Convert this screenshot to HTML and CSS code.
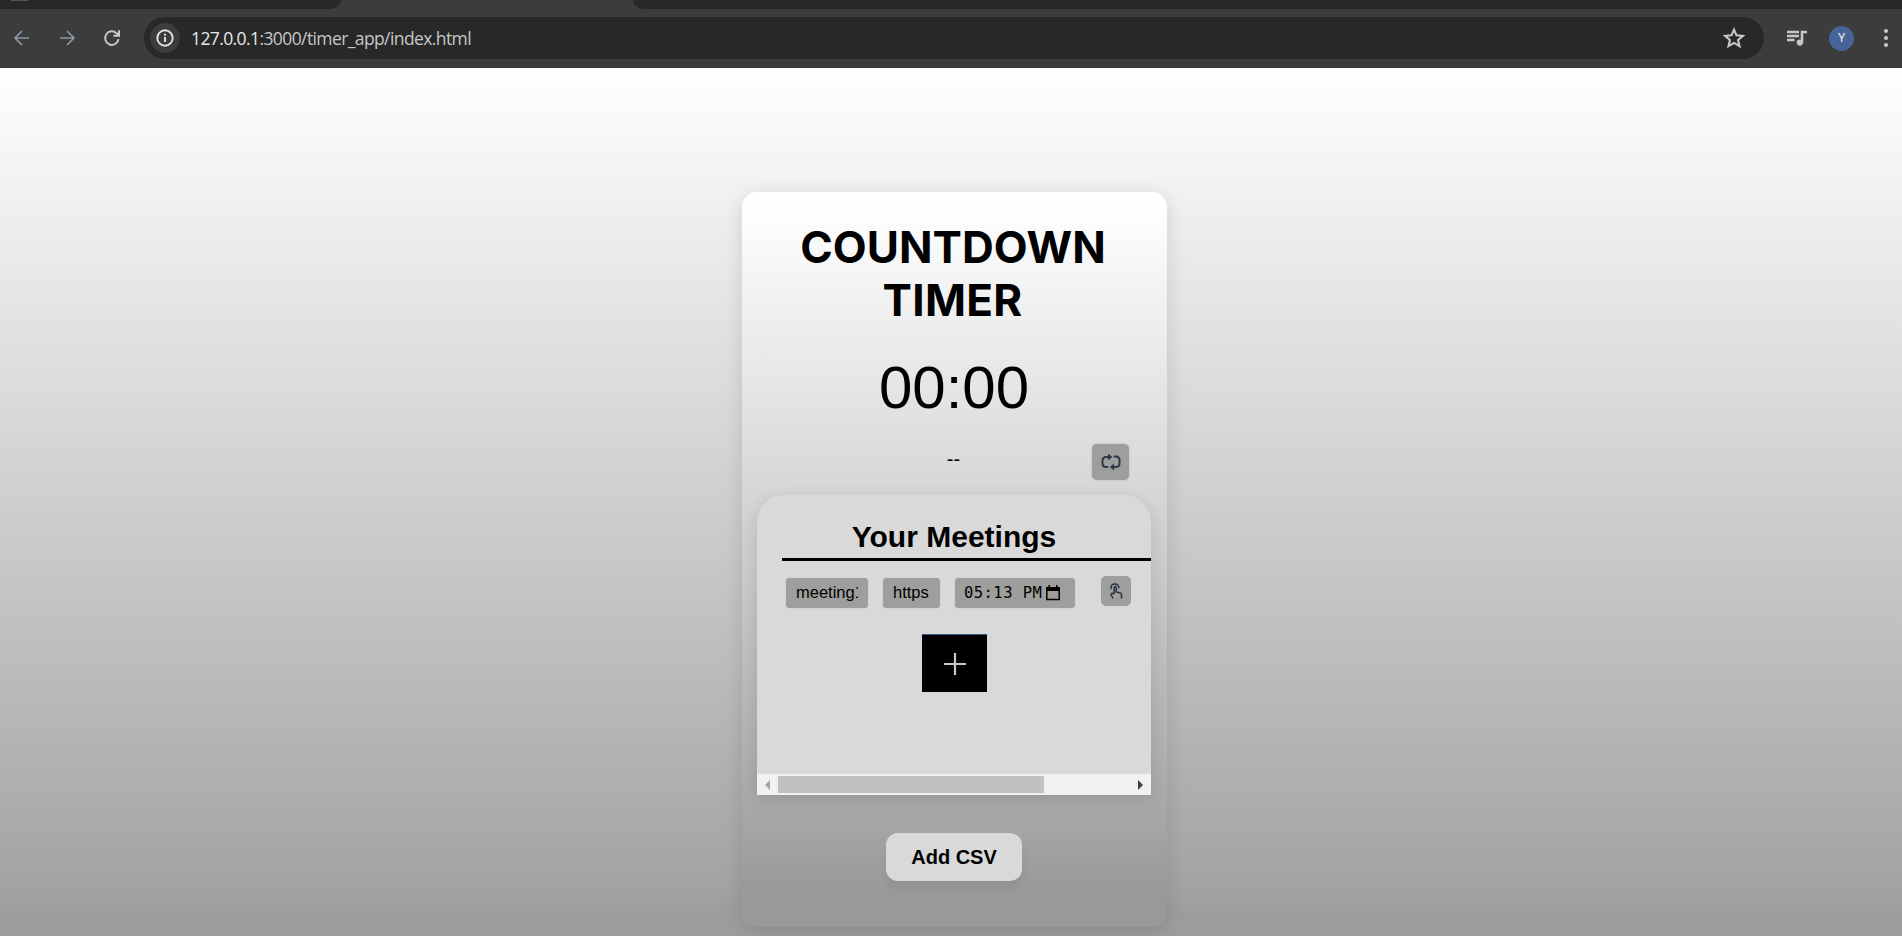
FILE: index.html
```html
<!DOCTYPE html>
<html lang="en">
<head>
<meta charset="utf-8">
<title>Countdown Timer</title>
<link rel="stylesheet" href="styles.css">
</head>
<body>
<header class="browser">
  <div class="tabs"><div class="tab-left"><i></i></div><div class="tab-right"></div></div>
  <div class="toolbar">
    <nav class="nav">
      <svg width="18" height="18" viewBox="0 0 18 18" class="dim"><path d="M16 9H2M9 2 2 9l7 7"/></svg>
      <svg width="18" height="18" viewBox="0 0 18 18" class="dim"><path d="M2 9h14M9 2l7 7-7 7"/></svg>
      <svg width="18" height="18" viewBox="0 0 18 18" class="reload"><path d="M15.6 10.2A6.8 6.8 0 1 1 13.6 4.2L16 6.5M16 1.2v5.6h-5.6"/></svg>
    </nav>
    <div class="address">
      <span class="info"><svg width="20" height="20" viewBox="0 0 20 20"><circle cx="10" cy="10" r="7.7"/><path d="M10 9v5M10 5.8v2"/></svg></span>
      <span class="url"><b>127.0.0.1</b>:3000/timer_app/index.html</span>
      <svg class="star" width="22" height="22" viewBox="0 0 24 24"><path d="m12 2.8 2.7 6.3 6.9.6-5.2 4.5 1.6 6.7-6-3.6-6 3.6 1.6-6.7-5.2-4.5 6.9-.6z"/></svg>
    </div>
    <svg class="media" width="20" height="17" viewBox="0 0 20 17"><path d="M0 2h12M0 6h12M0 10h7.5M15 12.8V2h5"/><circle cx="12.8" cy="12.6" r="3.1"/></svg>
    <span class="avatar">Y</span>
    <svg class="dots" width="6" height="20" viewBox="0 0 6 20"><circle cx="3" cy="3" r="2.1"/><circle cx="3" cy="10" r="2.1"/><circle cx="3" cy="17" r="2.1"/></svg>
  </div>
</header>
<main class="page">
  <section class="card">
    <h1><span>COUNTDOWN</span><span class="second">TIMER</span></h1>
    <div class="time">00:00</div>
    <div class="status"><span>--</span>
      <button class="refresh" aria-label="Refresh"><svg width="20" height="18" viewBox="0 0 20 18"><path d="M7.2 14H5.5Q1.5 14 1.5 10.5V7.5Q1.5 4 5.5 4H9M12.8 3.5h1.7Q18.5 3.5 18.5 7v3.5Q18.5 14 14.5 14H12"/><path class="fill" d="M7 .5 11.5 4 7 7.5zM13 10.5 8.8 14l4.2 3.5z"/></svg></button>
    </div>
    <div class="meetings">
      <div class="content">
        <h2>Your Meetings</h2>
        <div class="row">
          <div class="field name"><span>meeting1</span></div>
          <div class="field link">https</div>
          <div class="field clock"><span>05:13 PM</span><svg width="14" height="16" viewBox="0 0 14 16"><path d="M.8 3.2h12.4v11.3H.8zM3.2 0v3M10.8 0v3"/><path class="top" d="M0 2h14v4H0z"/></svg></div>
          <button class="touch" aria-label="Open"><svg width="14" height="17" viewBox="0 0 14 17"><path d="M5.2 11V4.8q0-1.3 1-1.3t1 1.3V9l4 .9q1.5.4 1.3 1.8V15.5M5.2 10.5 3 10.2 2 11.5l2 4M2.2 6Q1.3 1.2 5.5.9 10 .8 9.8 5.3"/></svg></button>
        </div>
        <button class="plus" aria-label="Add meeting"><svg width="22" height="22" viewBox="0 0 22 22"><path d="M11 0v22M0 11h22"/></svg></button>
      </div>
      <div class="scrollbar"><i class="left"></i><div class="thumb"></div><i class="right"></i></div>
    </div>
    <button class="csv">Add CSV</button>
  </section>
</main>
</body>
</html>
```

FILE: styles.css
```css
* { box-sizing: border-box; }
body { margin: 0; height: 936px; overflow: hidden; display: flex; flex-direction: column; font-family: "Liberation Sans", Arial, sans-serif; color: #000; }
h1, h2 { margin: 0; }
button { border: 0; padding: 0; font-family: inherit; color: inherit; }
svg { display: block; fill: none; stroke: currentColor; flex: none; }

.browser { height: 68px; background: #3c3c3c; flex: none; }
.tabs { display: flex; justify-content: space-between; height: 9px; }
.tab-left { width: 341px; background: #282828; border-bottom-right-radius: 11px 9px; padding-left: 11px; }
.tab-left i { display: block; width: 17px; height: 1px; background: #555; }
.tab-right { width: 1269px; background: #282828; border-bottom-left-radius: 11px 9px; }
.toolbar { height: 59px; display: flex; align-items: center; padding: 0 13px 1px 13px; }
.nav { display: flex; gap: 27px; width: 131px; color: #c7c7c7; }
.nav svg { stroke-width: 2; }
.nav .dim { color: #8c95a3; stroke-width: 1.7; }
.address { width: 1620px; height: 42px; border-radius: 21px; background: #282828; display: flex; align-items: center; padding: 0 19px 0 6px; color: #c7c7c7; }
.info { width: 30px; height: 30px; border-radius: 50%; background: #3c3c3c; display: grid; place-items: center; color: #e3e3e3; }
.info svg { stroke-width: 1.9; }
.url { margin-left: 11px; font: 17.5px/24px "Open Sans", "Noto Sans", sans-serif; letter-spacing: -.6px; flex: 1; }
.url b { font-weight: 400; color: #e8e8e8; }
.star { stroke-width: 2.3; }
.media { margin-left: 23px; stroke-width: 2.6; color: #c7c7c7; }
.media circle, .dots circle { fill: currentColor; stroke: none; }
.avatar { margin-left: 22px; width: 25px; height: 25px; border-radius: 50%; background: #486397; color: #eee; font: 12px/25px Roboto, sans-serif; text-align: center; }
.dots { margin-left: 29px; color: #c7c7c7; }

.page { flex: 1; padding-top: 124px; background: linear-gradient(#fff 0, #d9d9d9 340px, #a3a3a3 820px, #9d9d9b 845px); }
.card { width: 425px; height: 735px; margin-left: 742px; border-radius: 15px; display: flex; flex-direction: column; align-items: center; background: linear-gradient(#fff 0, #fff 10px, #dadada 275px, #a5a5a5 635px, #9e9e9c 670px, #999 705px); box-shadow: 0 4px 20px rgba(0,0,0,.13); }
h1 { height: 150px; padding-top: 29px; margin-right: 3px; font: 700 44px/53px Inter, sans-serif; display: flex; flex-direction: column; align-items: center; }
h1 .second { letter-spacing: .3px; margin-right: 1px; }
.time { font-size: 60px; line-height: 70px; padding-top: 11px; margin-right: 1px; height: 102px; }
.status { height: 51px; width: 100%; display: grid; grid-template-columns: 350px 75px; }
.status span { font-size: 20px; line-height: 23px; padding-top: 4px; text-align: center; padding-left: 73px; }
.refresh { width: 37px; height: 36px; border-radius: 5px; background: #9e9e9c; display: grid; place-items: center; color: #303844; box-shadow: 0 0 2px #aaa; }
.refresh svg { stroke-width: 2; }
.fill { fill: currentColor; stroke: none; }
.meetings { width: 394px; height: 300px; margin-right: 1px; border-radius: 27px 27px 0 0; background: #d9d9d9; display: flex; flex-direction: column; justify-content: space-between; box-shadow: 0 4px 16px rgba(0,0,0,.12); }
.content { padding-left: 25px; display: flex; flex-direction: column; }
h2 { font-size: 30px; line-height: 34px; height: 66px; padding: 25px 25px 0 0; text-align: center; border-bottom: 3px solid #000; }
.row { display: flex; padding: 15px 0 0 4px; height: 73px; }
.field { height: 30px; margin: 2px 15px 0 0; border-radius: 4px; background: #9e9e9c; font-size: 16.5px; line-height: 29px; box-shadow: 0 0 1px #999; white-space: nowrap; overflow: hidden; }
.name { width: 82px; padding: 0 10px; }
.name span { display: block; width: 62px; overflow: hidden; }
.link { width: 57px; padding-left: 10px; }
.clock { width: 120px; padding-left: 9px; margin-right: 26px; display: flex; align-items: center; gap: 4px; font: 15.5px/30px "DejaVu Sans Mono", monospace; letter-spacing: .45px; }
.clock svg { stroke-width: 1.5; }
.clock .top { fill: currentColor; stroke: none; }
.touch { width: 30px; height: 30px; border-radius: 5px; background: #9e9e9c; display: grid; place-items: center; color: #293344; }
.touch svg { stroke-width: 1.5; }
.plus { width: 65px; height: 58px; margin-left: 140px; background: #000; color: #c9c9c9; display: grid; place-items: center; border-top: 1px solid #375b87; }
.plus svg { stroke-width: 2.2; }
.scrollbar { height: 21px; background: #f1f1f1; display: flex; align-items: center; padding: 0 8px; }
.scrollbar i { border: 5px solid transparent; }
.scrollbar .left { border-left: 0; border-right: 5px solid #a3a3a3; }
.scrollbar .right { border-right: 0; border-left: 5px solid #404038; margin-left: auto; }
.thumb { width: 266px; height: 17px; margin-left: 8px; background: #c1c1c1; }
.csv { width: 136px; height: 48px; margin-top: 38px; margin-right: 1px; border-radius: 12px; background: #d9d9d9; font-size: 20px; font-weight: 700; line-height: 46px; box-shadow: 0 8px 8px rgba(0,0,0,.06); }
```
